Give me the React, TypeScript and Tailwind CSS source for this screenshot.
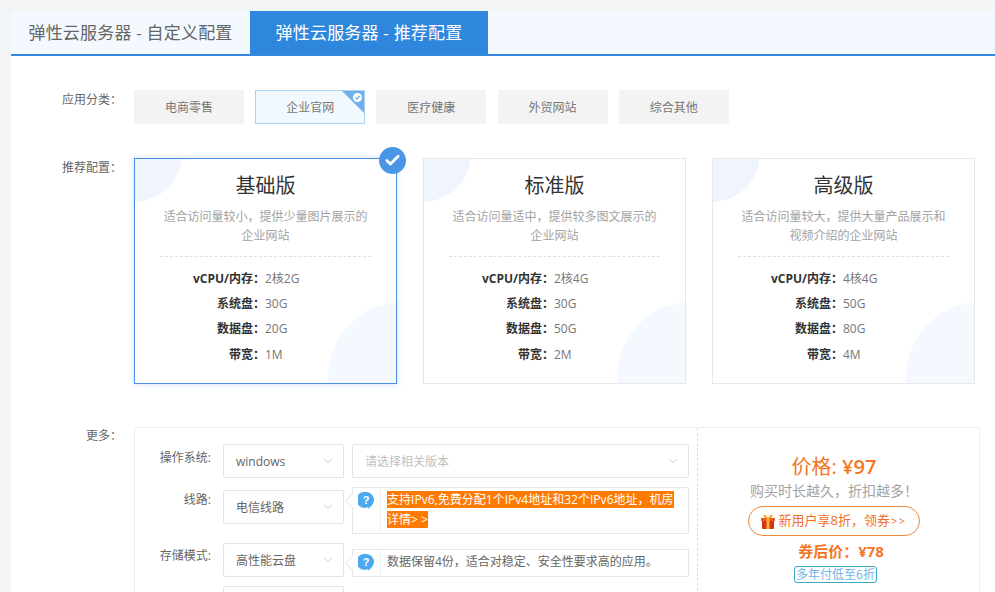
import { ChevronDown, Check } from 'lucide-react'

const categories = ['电商零售', '企业官网', '医疗健康', '外贸网站', '综合其他']

const plans = [
  { name: '基础版', desc: ['适合访问量较小，提供少量图片展示的', '企业网站'], cpu: '2核2G', sys: '30G', data: '20G', net: '1M', active: true },
  { name: '标准版', desc: ['适合访问量适中，提供较多图文展示的', '企业网站'], cpu: '2核4G', sys: '30G', data: '50G', net: '2M', active: false },
  { name: '高级版', desc: ['适合访问量较大，提供大量产品展示和', '视频介绍的企业网站'], cpu: '4核4G', sys: '50G', data: '80G', net: '4M', active: false },
]

function SpecRow({ label, value }: { label: string; value: string }) {
  return (
    <div className="flex h-[25.3px] items-center text-[12px]">
      <span className="w-[98px] text-right font-bold text-[#333]">{label}：</span>
      <span className="text-[#777]">{value}</span>
    </div>
  )
}

function PlanCard({ plan }: { plan: (typeof plans)[number] }) {
  return (
    <div
      className={`relative h-[226px] w-[263px] shrink-0 bg-white ${
        plan.active ? 'border border-[#4a90e2] shadow-[0_0_6px_rgba(74,144,226,0.25)]' : 'border border-[#e8e8e8]'
      }`}
    >
      <div className="absolute inset-0 overflow-hidden">
        <div className="absolute -left-[50px] -top-[62px] h-[105px] w-[97px] rounded-full bg-[#f0f5fd]" />
        <div className="absolute -right-[82px] -bottom-[69px] h-[150px] w-[150px] rounded-full bg-[#f3f9fe]" />
      </div>
      {plan.active && (
        <div className="absolute -right-[10px] -top-[12px] flex h-[27px] w-[27px] items-center justify-center rounded-full bg-[#4a96e6]">
          <Check className="h-[17px] w-[17px] text-white" strokeWidth={4} />
        </div>
      )}
      <div className="relative flex flex-col items-center pt-[12px]">
        <div className="text-[20px] leading-[29px] text-[#333]">{plan.name}</div>
        <div className="mt-[7px] text-center text-[12px] leading-[19px] text-[#a3a3a3]">
          <div>{plan.desc[0]}</div>
          <div>{plan.desc[1]}</div>
        </div>
        <div className="mt-[11px] h-0 w-[211px] border-t border-dashed border-[#e0e0e0]" />
      </div>
      <div className="relative mt-[9px] pl-[32px]">
        <SpecRow label="vCPU/内存" value={plan.cpu} />
        <SpecRow label="系统盘" value={plan.sys} />
        <SpecRow label="数据盘" value={plan.data} />
        <SpecRow label="带宽" value={plan.net} />
      </div>
    </div>
  )
}

function Select({ value, placeholder, width }: { value: string; placeholder?: boolean; width: string }) {
  return (
    <div className={`flex h-[34px] shrink-0 items-center justify-between rounded-[2px] border border-[#e3e3e3] bg-white pl-[12px] pr-[8px] pt-[2px] text-[12px] ${width} ${placeholder ? 'text-[#c0c0c0]' : 'text-[#666]'}`}>
      <span>{value}</span>
      <ChevronDown className="-mt-[2px] h-[14px] w-[14px] text-[#c4c4c4]" strokeWidth={1.5} />
    </div>
  )
}

function BubbleIcon() {
  return (
    <svg viewBox="0 0 16 17" className="h-[17px] w-[16px]">
      <path d="M8 0a8 8 0 0 1 8 7.600c0 4.400-3.600 7.600-6 9.400.4-1 .4-1.600.2-2A8 8 0 1 1 8 0z" fill="#4aa9f0" />
      <text x="8" y="11.500" textAnchor="middle" fontSize="11" fontWeight="700" fill="#fff" fontFamily="Liberation Sans, sans-serif">?</text>
    </svg>
  )
}

function Tip({ children, className }: { children: React.ReactNode; className: string }) {
  return (
    <div className={`relative flex w-[337px] shrink-0 border border-[#e8e8e8] bg-white ${className}`}>
      <div className="absolute -left-[6px] top-[8px] h-[10px] w-[10px] rotate-45 border-b border-l border-[#e8e8e8] bg-white" />
      <div className="relative flex w-[27px] shrink-0 justify-center pr-[1px] pt-[4px]">
        <BubbleIcon />
      </div>
      <div className="my-[1px] w-px bg-[#eee]" />
      <div className="flex-1 pl-[6px] pr-[4px] pt-[2px] text-[12px] leading-[20px] text-[#666]">{children}</div>
    </div>
  )
}

export default function App() {
  return (
    <div
      className="h-[592px] w-[995px] overflow-hidden bg-[#f3f4f6] pl-[11px] pt-[11px]"
      style={{ fontFamily: '"Open Sans", "Noto Sans CJK SC", sans-serif' }}
    >
      <div className="h-[581px] bg-white">
        <div className="flex h-[45px] border-b-2 border-[#3588dc] bg-[#f3f9fe]">
          <div className="flex w-[239px] items-center justify-center text-[17px] tracking-[0.2px] text-[#666]">弹性云服务器 - 自定义配置</div>
          <div className="flex w-[238px] items-center justify-center bg-[#2e87dd] text-[17px] tracking-[0.2px] text-white">弹性云服务器 - 推荐配置</div>
        </div>

        <div className="flex pt-[34px]">
          <div className="w-[111px] pt-[2px] text-right text-[12px] leading-[16px] text-[#666]">应用分类：</div>
          <div className="ml-[12px] flex gap-[11.2px]">
            {categories.map((c, i) => (
              <div
                key={c}
                className={`relative flex h-[34px] w-[110px] items-center justify-center overflow-hidden pt-[2px] text-[12px] text-[#777] ${
                  i === 1 ? 'border border-[#a9d3f2] bg-[#f1f9fe]' : 'bg-[#f3f3f3]'
                }`}
              >
                {c}
                {i === 1 && (
                  <svg viewBox="0 0 22 22" className="absolute right-0 top-0 h-[22px] w-[22px]">
                    <path d="M0 0h22v22z" fill="#6fb0ea" />
                    <circle cx="15.500" cy="6.500" r="4.500" fill="#fff" />
                    <path d="M13.500 6.500l1.500 1.500 2.800-3" fill="none" stroke="#6fb0ea" strokeWidth="1.300" />
                  </svg>
                )}
              </div>
            ))}
          </div>
        </div>

        <div className="flex pt-[34px]">
          <div className="w-[111px] pt-[2px] text-right text-[12px] leading-[16px] text-[#666]">推荐配置：</div>
          <div className="ml-[12px] flex gap-[26px]">
            {plans.map(p => (
              <PlanCard key={p.name} plan={p} />
            ))}
          </div>
        </div>

        <div className="flex pt-[43px]">
          <div className="w-[111px] pt-[1px] text-right text-[12px] leading-[16px] text-[#666]">更多：</div>
          <div className="ml-[12px] flex h-[200px] w-[846px] border border-[#efefef] bg-white">
            <div className="w-[563px] shrink-0 border-r border-dashed border-[#ddd] pl-[24px] pt-[16px]">
              <div className="flex items-start">
                <div className="w-[52px] pt-[6px] text-right text-[12px] leading-[16px] text-[#666]">操作系统:</div>
                <div className="ml-[12px] flex gap-[8px]">
                  <Select value="windows" width="w-[121px]" />
                  <Select value="请选择相关版本" placeholder width="w-[337px]" />
                </div>
              </div>
              <div className="mt-[9px] flex items-start">
                <div className="w-[52px] pt-[5px] text-right text-[12px] leading-[16px] text-[#666]">线路:</div>
                <div className="ml-[12px] flex gap-[8px]">
                  <div className="pt-[3px]">
                    <Select value="电信线路" width="w-[121px]" />
                  </div>
                  <Tip className="h-[47px]">
                    <span className="bg-[#ff7a00] tracking-[0.02px] text-white">支持IPv6,免费分配1个IPv4地址和32个IPv6地址，机房详情&gt; &gt;</span>
                  </Tip>
                </div>
              </div>
              <div className="mt-[9px] flex items-start">
                <div className="w-[52px] pt-[5px] text-right text-[12px] leading-[16px] text-[#666]">存储模式:</div>
                <div className="ml-[12px] flex gap-[8px]">
                  <Select value="高性能云盘" width="w-[121px]" />
                  <div className="pt-[6px]">
                    <Tip className="h-[28px]">
                      <span>数据保留4份，适合对稳定、安全性要求高的应用。</span>
                    </Tip>
                  </div>
                </div>
              </div>
              <div className="ml-[64px] mt-[9px]">
                <Select value="" width="w-[121px]" />
              </div>
            </div>
            <div className="flex flex-1 flex-col items-center pr-[9px] pt-[24px]">
              <div className="text-[20px] leading-[29px] text-[#f47521]">
                价格: <span className="font-semibold">¥97</span>
              </div>
              <div className="mt-[1px] text-[14px] leading-[18px] text-[#a3a3a3]">购买时长越久，折扣越多！</div>
              <div className="mt-[6px] flex h-[30px] w-[172px] items-center justify-center rounded-full border border-[#ef8a3c] text-[13px] text-[#f0702a]">
                <svg viewBox="0 0 14 15" className="mr-[3px] h-[15px] w-[14px]">
                  <rect x="1" y="6" width="12" height="9" rx="1" fill="#d8341c" />
                  <rect x="0" y="4" width="14" height="3" fill="#ea5a1f" />
                  <rect x="5.500" y="4" width="3" height="11" fill="#f7b52c" />
                  <path d="M7 4C5 0 2 0 2.500 2.200 3 4 5 4 7 4zM7 4c2-4 5-4 4.500-1.800C11 4 9 4 7 4z" fill="#f7a52c" />
                </svg>
                新用户享8折，领券<span className="ml-[1px] text-[11px] tracking-[1.500px]">&gt;&gt;</span>
              </div>
              <div className="ml-[14px] mt-[5px] text-[15px] font-bold leading-[20px] text-[#f47521]">券后价：¥78</div>
              <div className="ml-[3px] mt-[5px] rounded-[3px] border border-[#3aa9c2] px-[1px] text-[12px] leading-[15px] text-[#6fb2e6]">多年付低至6折</div>
            </div>
          </div>
        </div>
      </div>
    </div>
  )
}
